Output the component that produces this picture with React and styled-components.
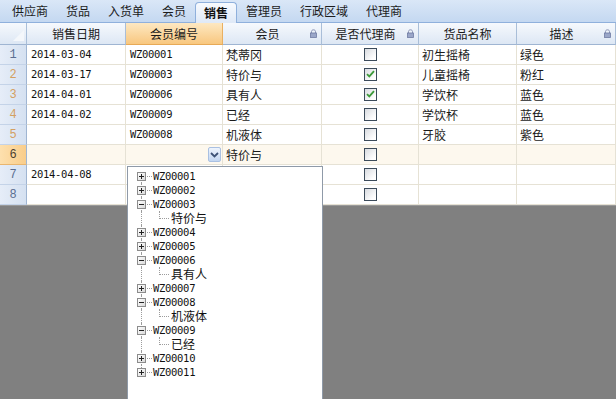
import styled, { createGlobalStyle, css } from "styled-components";

const GlobalStyle = createGlobalStyle`
  html, body {
    margin: 0;
    padding: 0;
  }
  body {
    width: 616px;
    height: 399px;
    overflow: hidden;
    background: #808080;
    font-family: "Noto Sans CJK SC", "Noto Sans", sans-serif;
    color: #1a1a1a;
  }
  * {
    box-sizing: border-box;
  }
`;

const tabs = ["供应商", "货品", "入货单", "会员", "销售", "管理员", "行政区域", "代理商"];

const columns = [
  { title: "销售日期" },
  { title: "会员编号", active: true },
  { title: "会员", lock: true },
  { title: "是否代理商", lock: true },
  { title: "货品名称" },
  { title: "描述", lock: true },
];

const rows = [
  { date: "2014-03-04", code: "WZ00001", member: "梵蒂冈", agent: false, goods: "初生摇椅", desc: "绿色" },
  { date: "2014-03-17", code: "WZ00003", member: "特价与", agent: true, goods: "儿童摇椅", desc: "粉红" },
  { date: "2014-04-01", code: "WZ00006", member: "具有人", agent: true, goods: "学饮杯", desc: "蓝色" },
  { date: "2014-04-02", code: "WZ00009", member: "已经", agent: false, goods: "学饮杯", desc: "蓝色" },
  { date: "", code: "WZ00008", member: "机液体", agent: false, goods: "牙胶", desc: "紫色" },
  { date: "", code: "", member: "特价与", agent: false, goods: "", desc: "", current: true },
  { date: "2014-04-08", code: "", member: "", agent: false, goods: "", desc: "" },
  { date: "", code: "", member: "", agent: false, goods: "", desc: "" },
];

const numColors = ["#5b6f92", "#d3a062", "#d3a062", "#d3a062", "#d3a062", "#4a4030", "#5b6f92", "#5b6f92"];

const tree = [
  { code: "WZ00001" },
  { code: "WZ00002" },
  { code: "WZ00003", child: "特价与" },
  { code: "WZ00004" },
  { code: "WZ00005" },
  { code: "WZ00006", child: "具有人" },
  { code: "WZ00007" },
  { code: "WZ00008", child: "机液体" },
  { code: "WZ00009", child: "已经" },
  { code: "WZ00010" },
  { code: "WZ00011" },
];

function Lock() {
  return (
    <LockIcon width="7" height="9" viewBox="0 0 7 9">
      <path d="M1.5 4V2.6C1.5 1.5 2.3 0.8 3.5 0.8S5.5 1.5 5.5 2.6V4" fill="none" stroke="#8a93b4" strokeWidth="1" />
      <rect x="0.5" y="4" width="6" height="4.5" fill="#9aa6c8" stroke="#6f7ca3" strokeWidth="0.8" />
    </LockIcon>
  );
}

function Check({ checked }) {
  return (
    <CheckBox>
      {checked && (
        <svg width="9" height="8" viewBox="0 0 9 8">
          <path d="M1 4.2L3.3 6.4L8 1.2" fill="none" stroke="#3d9a3a" strokeWidth="1.8" />
        </svg>
      )}
    </CheckBox>
  );
}

function Expander({ open }) {
  return (
    <ExpBox>
      <svg width="7" height="7" viewBox="0 0 7 7">
        <path d="M1 3.5H6" stroke="#222" strokeWidth="1" />
        {!open && <path d="M3.5 1V6" stroke="#222" strokeWidth="1" />}
      </svg>
    </ExpBox>
  );
}

function MemberTree() {
  const last = tree.length - 1;
  return (
    <Popup>
      {tree.map((node, i) => (
        <div key={node.code}>
          <TreeRow>
            <Gutter $first={i === 0} $last={i === last}>
              <Expander open={!!node.child} />
            </Gutter>
            <Dots />
            <CodeText>{node.code}</CodeText>
          </TreeRow>
          {node.child && (
            <TreeRow>
              <Gutter />
              <Elbow />
              <ChildText>{node.child}</ChildText>
            </TreeRow>
          )}
        </div>
      ))}
    </Popup>
  );
}

export default function App() {
  return (
    <>
      <GlobalStyle />
      <Frame>
        <TabBar>
          {tabs.map((t) => (
            <Tab key={t} $active={t === "销售"}>
              {t}
            </Tab>
          ))}
        </TabBar>
        <Grid>
          <Corner>
            <svg width="11" height="11" viewBox="0 0 11 11">
              <path d="M11 0V11H0Z" fill="#f4f7fb" />
            </svg>
          </Corner>
          {columns.map((c) => (
            <HeadCell key={c.title} $active={c.active}>
              <HeadText $lock={c.lock}>{c.title}</HeadText>
              {c.lock && <Lock />}
            </HeadCell>
          ))}
          {rows.map((r, i) => (
            <Row key={i}>
              <RowHead $current={r.current} style={{ color: numColors[i] }}>
                {i + 1}
              </RowHead>
              <Cell $mono $current={r.current}>
                {r.date}
              </Cell>
              {r.current ? (
                <Cell $editing $current>
                  <DropButton>
                    <svg width="9" height="6" viewBox="0 0 9 6">
                      <path d="M1 1L4.5 4.5L8 1" fill="none" stroke="#3e5276" strokeWidth="1.8" />
                    </svg>
                  </DropButton>
                  <MemberTree />
                </Cell>
              ) : (
                <Cell $mono>{r.code}</Cell>
              )}
              <Cell $current={r.current}>{r.member}</Cell>
              <Cell $center $current={r.current}>
                <Check checked={r.agent} />
              </Cell>
              <Cell $current={r.current}>{r.goods}</Cell>
              <Cell $current={r.current}>{r.desc}</Cell>
            </Row>
          ))}
        </Grid>
        <Backdrop />
      </Frame>
    </>
  );
}

const Frame = styled.div`
  display: flex;
  flex-direction: column;
  width: 616px;
  height: 399px;
  overflow: hidden;
`;

const TabBar = styled.div`
  display: flex;
  align-items: flex-end;
  height: 23px;
  padding-left: 3px;
  background: linear-gradient(#dae7f7, #c4d8f1);
  border-bottom: 1px solid #8fb0dc;
`;

const Tab = styled.div`
  height: 22px;
  line-height: 22px;
  padding: 0 9px;
  font-size: 12px;
  color: #1c1c1c;
  ${(p) =>
    p.$active &&
    css`
      height: 21px;
      line-height: 20px;
      margin-bottom: -1px;
      padding: 0 8px;
      font-weight: bold;
      color: #111;
      background: linear-gradient(#f7fafe, #dfe9f7);
      border: 1px solid #8fb0dc;
      border-bottom: none;
      border-radius: 4px 4px 0 0;
    `}
`;

const Grid = styled.div`
  display: grid;
  grid-template-columns: 27px 99px 97px 99px 97px 98px 99px;
  grid-template-rows: 22px repeat(8, 20px);
  background: #fff;
  border-bottom: 1px solid #9a9a9a;
`;

const Row = styled.div`
  display: contents;
`;

const headBg = css`
  background: linear-gradient(#f6f9fd, #dde7f4);
  border-right: 1px solid #a9bed8;
  border-bottom: 1px solid #9fb5d2;
`;

const Corner = styled.div`
  ${headBg}
  display: flex;
  align-items: flex-end;
  justify-content: flex-end;
  padding: 0 2px 3px 0;
`;

const HeadCell = styled.div`
  ${headBg}
  display: flex;
  align-items: center;
  font-size: 12px;
  color: #1b1b1b;
  ${(p) =>
    p.$active &&
    css`
      background: linear-gradient(#fde8c2, #f8c77f);
      border-right-color: #eab061;
      border-bottom-color: #e7a956;
    `}
`;

const HeadText = styled.span`
  flex: 1;
  text-align: center;
  padding-left: ${(p) => (p.$lock ? "2px" : "0")};
`;

const LockIcon = styled.svg`
  flex: none;
  margin: 0 4px 1px 0;
`;

const RowHead = styled.div`
  display: flex;
  align-items: center;
  justify-content: center;
  font-family: "Liberation Mono", monospace;
  font-size: 12px;
  background: linear-gradient(to right, #e6edf8, #d5e1f1);
  border-right: 1px solid #9fb5d2;
  border-bottom: 1px solid #c4d3e8;
  ${(p) =>
    p.$current &&
    css`
      background: linear-gradient(to right, #fde0ae, #f9cd8a);
      border-bottom-color: #e9b66f;
    `}
`;

const Cell = styled.div`
  position: relative;
  display: flex;
  align-items: center;
  padding-left: 3px;
  font-size: 12px;
  line-height: 19px;
  white-space: nowrap;
  background: ${(p) => (p.$current ? "#fdf8ee" : "#fff")};
  border-right: 1px solid #e6e2d5;
  border-bottom: 1px solid #e6e2d5;
  ${(p) =>
    p.$mono &&
    css`
      padding-left: 4px;
      font-family: "DejaVu Sans Mono", monospace;
      font-size: 10.5px;
      letter-spacing: -0.3px;
      color: #111;
    `}
  ${(p) =>
    p.$center &&
    css`
      justify-content: center;
      padding-left: 0;
    `}
  ${(p) =>
    p.$editing &&
    css`
      justify-content: flex-end;
      padding: 0 1px 0 0;
    `}
`;

const DropButton = styled.div`
  display: flex;
  align-items: center;
  justify-content: center;
  width: 13px;
  height: 15px;
  border: 1px solid #a9c0e2;
  border-radius: 2px;
  background: linear-gradient(#eef4fd, #c3d6f1);
`;

const CheckBox = styled.span`
  display: flex;
  align-items: center;
  justify-content: center;
  width: 13px;
  height: 13px;
  margin-top: -1px;
  border: 1px solid #3c4b5a;
  background: linear-gradient(135deg, #d8dbe0, #ffffff 80%);
`;

const Backdrop = styled.div`
  flex: 1;
  background: #808080;
`;

const Popup = styled.div`
  position: absolute;
  top: 21px;
  left: 1px;
  z-index: 5;
  width: 196px;
  height: 240px;
  padding-top: 2px;
  background: #fff;
  border: 1px solid #8f9aa8;
`;

const TreeRow = styled.div`
  display: flex;
  align-items: center;
  height: 14px;
  padding-left: 9px;
`;

const Gutter = styled.div`
  position: relative;
  display: flex;
  align-items: center;
  width: 9px;
  height: 14px;
  flex: none;
  &::before {
    content: "";
    position: absolute;
    left: 4px;
    top: ${(p) => (p.$first ? "7px" : "0")};
    bottom: ${(p) => (p.$last ? "7px" : "0")};
    border-left: 1px dotted #9c9c9c;
  }
`;

const ExpBox = styled.span`
  position: relative;
  z-index: 1;
  display: flex;
  align-items: center;
  justify-content: center;
  width: 9px;
  height: 9px;
  border: 1px solid #8c8c8c;
  background: linear-gradient(135deg, #ffffff, #d9d9d9);
`;

const Dots = styled.span`
  width: 5px;
  margin: 1px 1px 0 1px;
  border-top: 1px dotted #9c9c9c;
`;

const Elbow = styled.span`
  align-self: flex-start;
  width: 10px;
  height: 8px;
  margin-left: 13px;
  border-left: 1px dotted #9c9c9c;
  border-bottom: 1px dotted #9c9c9c;
`;

const CodeText = styled.span`
  font-family: "DejaVu Sans Mono", monospace;
  font-size: 10.5px;
  letter-spacing: -0.3px;
  line-height: 14px;
  color: #111;
`;

const ChildText = styled.span`
  margin-left: 2px;
  font-size: 12px;
  line-height: 14px;
  color: #111;
`;
